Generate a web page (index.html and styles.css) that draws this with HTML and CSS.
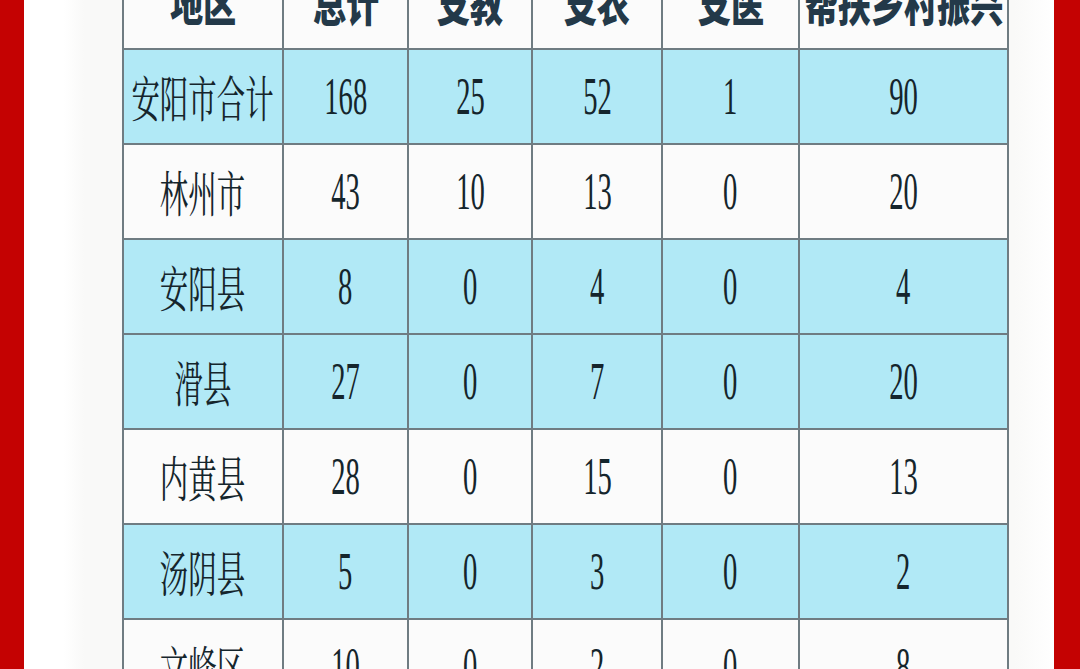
FILE: index.html
```html
<!DOCTYPE html>
<html lang="zh-CN">
<head>
<meta charset="utf-8">
<title>安阳市统计表</title>
<link rel="stylesheet" href="styles.css">
</head>
<body>
<div class="frame">
  <div class="side side-left"></div>
  <main class="sheet">
    <table class="stats">
      <colgroup>
        <col class="c1"><col class="c2"><col class="c3"><col class="c4"><col class="c5"><col class="c6">
      </colgroup>
      <thead>
        <tr>
          <th><span class="hd">地区</span></th>
          <th><span class="hd">总计</span></th>
          <th><span class="hd">支教</span></th>
          <th><span class="hd">支农</span></th>
          <th><span class="hd">支医</span></th>
          <th><span class="hd">帮扶乡村振兴</span></th>
        </tr>
      </thead>
      <tbody>
        <tr class="blue">
          <td><span class="zh">安阳市合计</span></td>
          <td><span class="num">168</span></td>
          <td><span class="num">25</span></td>
          <td><span class="num">52</span></td>
          <td><span class="num">1</span></td>
          <td><span class="num">90</span></td>
        </tr>
        <tr>
          <td><span class="zh">林州市</span></td>
          <td><span class="num">43</span></td>
          <td><span class="num">10</span></td>
          <td><span class="num">13</span></td>
          <td><span class="num">0</span></td>
          <td><span class="num">20</span></td>
        </tr>
        <tr class="blue">
          <td><span class="zh">安阳县</span></td>
          <td><span class="num">8</span></td>
          <td><span class="num">0</span></td>
          <td><span class="num">4</span></td>
          <td><span class="num">0</span></td>
          <td><span class="num">4</span></td>
        </tr>
        <tr class="blue">
          <td><span class="zh">滑县</span></td>
          <td><span class="num">27</span></td>
          <td><span class="num">0</span></td>
          <td><span class="num">7</span></td>
          <td><span class="num">0</span></td>
          <td><span class="num">20</span></td>
        </tr>
        <tr>
          <td><span class="zh">内黄县</span></td>
          <td><span class="num">28</span></td>
          <td><span class="num">0</span></td>
          <td><span class="num">15</span></td>
          <td><span class="num">0</span></td>
          <td><span class="num">13</span></td>
        </tr>
        <tr class="blue">
          <td><span class="zh">汤阴县</span></td>
          <td><span class="num">5</span></td>
          <td><span class="num">0</span></td>
          <td><span class="num">3</span></td>
          <td><span class="num">0</span></td>
          <td><span class="num">2</span></td>
        </tr>
        <tr>
          <td><span class="zh">文峰区</span></td>
          <td><span class="num">10</span></td>
          <td><span class="num">0</span></td>
          <td><span class="num">2</span></td>
          <td><span class="num">0</span></td>
          <td><span class="num">8</span></td>
        </tr>
      </tbody>
    </table>
  </main>
  <div class="side side-right"></div>
</div>
</body>
</html>
```

FILE: styles.css
```css
html, body {
  margin: 0;
  padding: 0;
  height: 100%;
  overflow: hidden;
  background: #ffffff;
}

.frame {
  display: flex;
  height: 669px;
  overflow: hidden;
}

.side {
  flex: none;
  background: #c40202;
}
.side-left { width: 24px; }
.side-right { width: 26px; }

.sheet {
  flex: 1;
  background: linear-gradient(90deg, #ffffff 0, #ffffff 40px, #f9f9f8 60px, #f9f9f8 calc(100% - 40px), #ffffff 100%);
  padding-left: 98px;
  overflow: hidden;
}

.stats {
  border-collapse: collapse;
  table-layout: fixed;
  width: 885px;
  margin-top: -47px;
  color: #15252c;
}

.c1 { width: 160px; }
.c2 { width: 125px; }
.c3 { width: 124px; }
.c4 { width: 130px; }
.c5 { width: 137px; }
.c6 { width: 209px; }

.stats th,
.stats td {
  border: 2px solid #6f7c82;
  height: 93px;
  padding: 0;
  text-align: center;
  vertical-align: middle;
  white-space: nowrap;
}

.stats th {
  background: #fbfbfb;
}

.stats tr.blue td {
  background: #b1e9f6;
}

.stats tbody tr:not(.blue) td {
  background: #fbfbfb;
}

.hd,
.zh,
.num {
  display: inline-block;
  margin: 0 -80px;
  line-height: 1;
}

.hd {
  font-family: "Noto Sans CJK SC", "Noto Sans", sans-serif;
  font-weight: 900;
  font-size: 46px;
  color: #233949;
  transform: scaleX(0.72);
}

.zh {
  font-family: "Noto Serif CJK SC", "Noto Sans CJK SC", serif;
  font-weight: 400;
  font-size: 49px;
  transform: scaleX(0.58);
}

.num {
  font-family: "Liberation Serif", "Times New Roman", serif;
  font-size: 53px;
  transform: scaleX(0.54);
}
```
